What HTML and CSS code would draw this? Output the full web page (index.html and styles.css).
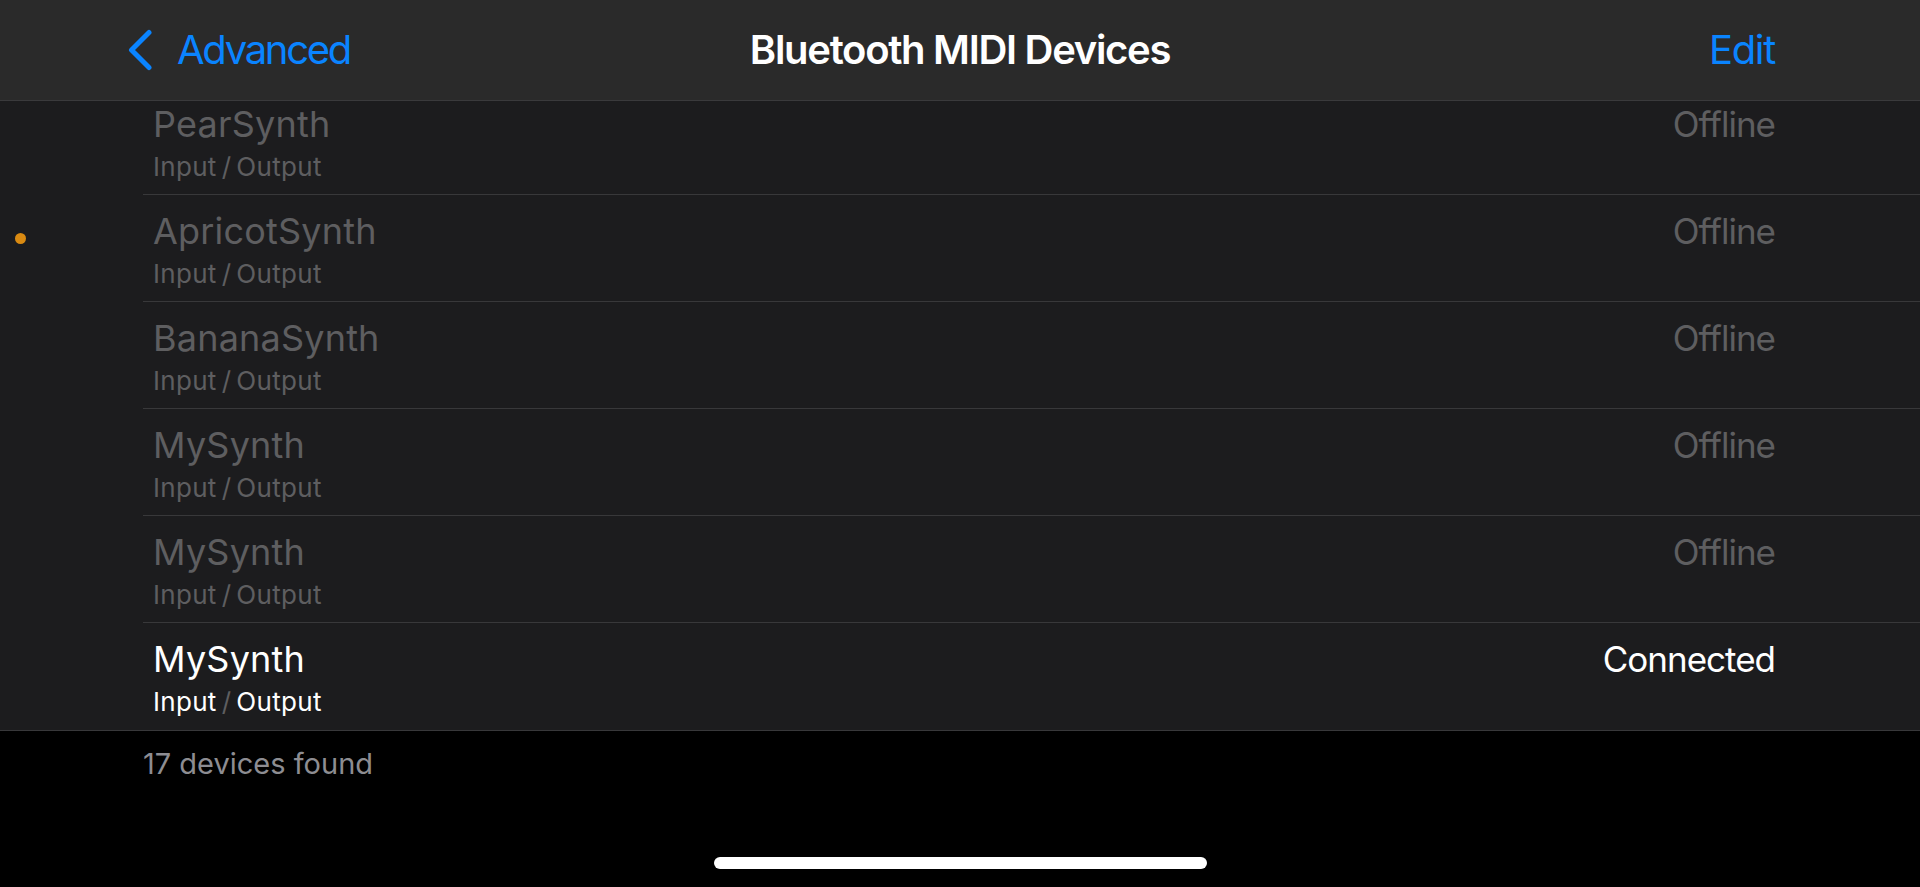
FILE: index.html
```html
<!DOCTYPE html>
<html lang="en">
<head>
<meta charset="utf-8">
<title>Bluetooth MIDI Devices</title>
<link rel="stylesheet" href="styles.css">
</head>
<body>
<div class="screen">
  <header class="navbar">
    <div class="nav-left">
      <svg class="chevron" width="26" height="42" viewBox="0 0 26 42" aria-hidden="true">
        <polyline points="22,3.5 4.5,21 22,38.5" fill="none" stroke="#0a84ff" stroke-width="5" stroke-linecap="round" stroke-linejoin="round"/>
      </svg>
      <span class="nav-link back-link">Advanced</span>
    </div>
    <h1 class="nav-title">Bluetooth MIDI Devices</h1>
    <div class="nav-right">
      <span class="nav-link">Edit</span>
    </div>
  </header>

  <main class="content">
    <span class="indicator-dot"></span>
    <ul class="device-list">
      <li class="device is-offline">
        <div class="device-info">
          <div class="device-name">PearSynth</div>
          <div class="device-ports">Input<span class="slash">/</span>Output</div>
        </div>
        <div class="device-status">Offline</div>
      </li>
      <li class="device is-offline">
        <div class="device-info">
          <div class="device-name">ApricotSynth</div>
          <div class="device-ports">Input<span class="slash">/</span>Output</div>
        </div>
        <div class="device-status">Offline</div>
      </li>
      <li class="device is-offline">
        <div class="device-info">
          <div class="device-name">BananaSynth</div>
          <div class="device-ports">Input<span class="slash">/</span>Output</div>
        </div>
        <div class="device-status">Offline</div>
      </li>
      <li class="device is-offline">
        <div class="device-info">
          <div class="device-name">MySynth</div>
          <div class="device-ports">Input<span class="slash">/</span>Output</div>
        </div>
        <div class="device-status">Offline</div>
      </li>
      <li class="device is-offline">
        <div class="device-info">
          <div class="device-name">MySynth</div>
          <div class="device-ports">Input<span class="slash">/</span>Output</div>
        </div>
        <div class="device-status">Offline</div>
      </li>
      <li class="device is-connected">
        <div class="device-info">
          <div class="device-name">MySynth</div>
          <div class="device-ports">Input<span class="slash">/</span>Output</div>
        </div>
        <div class="device-status">Connected</div>
      </li>
    </ul>
    <p class="footer-note">17 devices found</p>
  </main>

  <div class="home-bar">
    <span class="home-indicator"></span>
  </div>
</div>
</body>
</html>
```

FILE: styles.css
```css
* {
  box-sizing: border-box;
}

html, body {
  margin: 0;
  padding: 0;
  background: #000;
}

body {
  font-family: Inter, "Noto Sans", "Liberation Sans", sans-serif;
  color: #fff;
}

.screen {
  width: 1920px;
  height: 887px;
  display: flex;
  flex-direction: column;
  overflow: hidden;
  background: #000;
}

/* ---------- navigation bar ---------- */
.navbar {
  position: relative;
  z-index: 2;
  height: 101px;
  flex: none;
  display: grid;
  grid-template-columns: 1fr auto 1fr;
  align-items: center;
  padding: 0 127px;
  background: #2a2a2a;
  border-bottom: 1px solid #3a3a3c;
}

.nav-left {
  display: flex;
  align-items: center;
  gap: 24px;
}

.chevron {
  display: block;
  flex: none;
}

.nav-right {
  display: flex;
  justify-content: flex-end;
  padding-right: 18px;
}

.nav-link {
  font-size: 40px;
  line-height: 48px;
  color: #0a84ff;
  letter-spacing: -1.3px;
}

.back-link {
  letter-spacing: -2.3px;
}

.nav-title {
  margin: 0;
  font-size: 40px;
  line-height: 48px;
  font-weight: 600;
  color: #fff;
  letter-spacing: -1.3px;
}

/* ---------- list ---------- */
.content {
  position: relative;
  flex: none;
}

.indicator-dot {
  position: absolute;
  left: 15px;
  top: 132px;
  width: 11px;
  height: 11px;
  border-radius: 50%;
  background: #d98a12;
  z-index: 1;
}

.device-list {
  list-style: none;
  margin: -13px 0 0 0;
  padding: 0;
  background: #1c1c1e;
  border-bottom: 1px solid #38383a;
}

.device {
  height: 107px;
  margin-left: 143px;
  padding: 14px 145px 0 10px;
  display: flex;
  justify-content: space-between;
  align-items: flex-start;
  border-bottom: 1px solid #38383a;
}

.device:last-child {
  border-bottom: none;
}

.device-name {
  font-size: 36px;
  line-height: 44px;
  letter-spacing: 0.2px;
}

.device-ports {
  margin-top: 6px;
  font-size: 26px;
  line-height: 30px;
  letter-spacing: 0.3px;
}

.slash {
  margin: 0 5px;
  color: #5e5e60;
}

.device-status {
  font-size: 35px;
  line-height: 44px;
  letter-spacing: -1px;
}

.is-offline .device-name,
.is-offline .device-ports,
.is-offline .device-status {
  color: #5e5e60;
}

.is-connected .device-name,
.is-connected .device-ports,
.is-connected .device-status {
  color: #fff;
}

.footer-note {
  margin: 0;
  padding: 15px 0 0 143px;
  font-size: 29px;
  line-height: 36px;
  color: #8d8d92;
}

/* ---------- home indicator ---------- */
.home-bar {
  flex: 1;
  display: flex;
  justify-content: center;
  align-items: flex-end;
  padding-bottom: 18px;
}

.home-indicator {
  display: block;
  width: 493px;
  height: 12px;
  border-radius: 6px;
  background: #fff;
}
```
